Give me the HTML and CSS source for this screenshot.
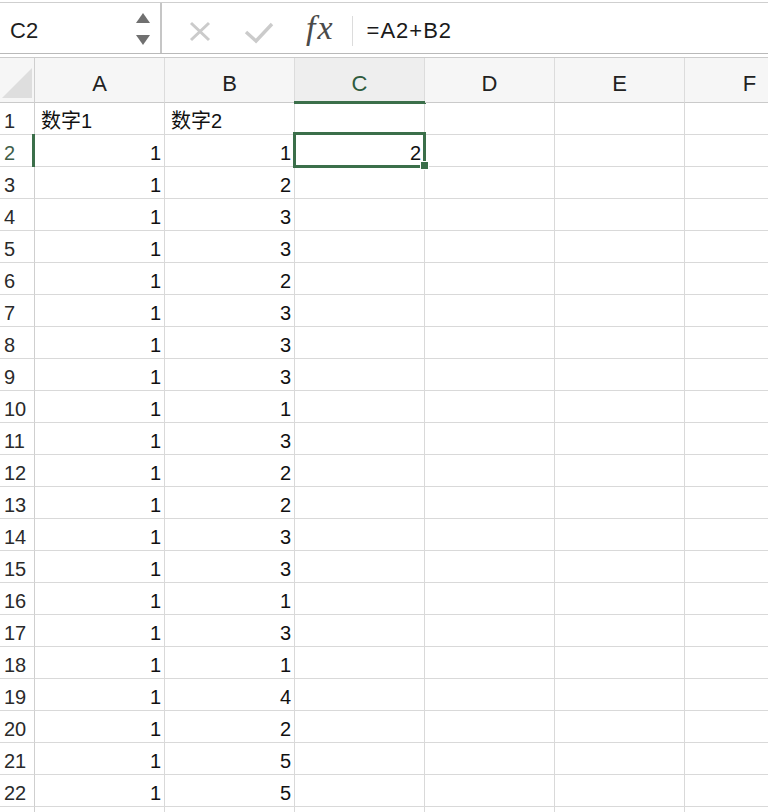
FILE: index.html
```html
<!DOCTYPE html>
<html lang="zh">
<head>
<meta charset="utf-8">
<title>Sheet</title>
<link rel="stylesheet" href="styles.css">
</head>
<body>
<div class="app">
  <div class="fbar">
    <div class="namebox">
      <span class="nb-text">C2</span>
      <svg class="spin" width="16" height="34" viewBox="0 0 16 34"><polygon points="8,1 1,11 15,11" fill="#707070"/><polygon points="1,23 15,23 8,33" fill="#707070"/></svg>
    </div>
    <svg class="ic-x" width="24" height="22" viewBox="0 0 24 22"><path d="M3 2 L21 19 M21 2 L3 19" stroke="#cbcbcb" stroke-width="3" fill="none"/></svg>
    <svg class="ic-ok" width="30" height="22" viewBox="0 0 30 22"><path d="M2 10 L12 19 L28 2" stroke="#cbcbcb" stroke-width="3.4" fill="none"/></svg>
    <span class="fx">fx</span>
    <span class="fdiv"></span>
    <span class="ftext">=A2+B2</span>
  </div>

  <div class="sheet">
    <div class="row head">
      <div class="corner"><svg width="30" height="30" viewBox="0 0 30 30"><polygon points="30,0 30,30 0,30" fill="#dedede"/></svg></div>
      <div class="ch">A</div><div class="ch">B</div><div class="ch on">C</div><div class="ch">D</div><div class="ch">E</div><div class="ch">F</div>
    </div>
    <div class="row"><div class="rh">1</div><div class="c">数字1</div><div class="c">数字2</div><div class="c"></div><div class="c"></div><div class="c"></div><div class="c"></div></div>
    <div class="row"><div class="rh on">2</div><div class="c n">1</div><div class="c n">1</div><div class="c n active">2<span class="sel"></span><span class="handle"></span></div><div class="c"></div><div class="c"></div><div class="c"></div></div>
    <div class="row"><div class="rh">3</div><div class="c n">1</div><div class="c n">2</div><div class="c"></div><div class="c"></div><div class="c"></div><div class="c"></div></div>
    <div class="row"><div class="rh">4</div><div class="c n">1</div><div class="c n">3</div><div class="c"></div><div class="c"></div><div class="c"></div><div class="c"></div></div>
    <div class="row"><div class="rh">5</div><div class="c n">1</div><div class="c n">3</div><div class="c"></div><div class="c"></div><div class="c"></div><div class="c"></div></div>
    <div class="row"><div class="rh">6</div><div class="c n">1</div><div class="c n">2</div><div class="c"></div><div class="c"></div><div class="c"></div><div class="c"></div></div>
    <div class="row"><div class="rh">7</div><div class="c n">1</div><div class="c n">3</div><div class="c"></div><div class="c"></div><div class="c"></div><div class="c"></div></div>
    <div class="row"><div class="rh">8</div><div class="c n">1</div><div class="c n">3</div><div class="c"></div><div class="c"></div><div class="c"></div><div class="c"></div></div>
    <div class="row"><div class="rh">9</div><div class="c n">1</div><div class="c n">3</div><div class="c"></div><div class="c"></div><div class="c"></div><div class="c"></div></div>
    <div class="row"><div class="rh">10</div><div class="c n">1</div><div class="c n">1</div><div class="c"></div><div class="c"></div><div class="c"></div><div class="c"></div></div>
    <div class="row"><div class="rh">11</div><div class="c n">1</div><div class="c n">3</div><div class="c"></div><div class="c"></div><div class="c"></div><div class="c"></div></div>
    <div class="row"><div class="rh">12</div><div class="c n">1</div><div class="c n">2</div><div class="c"></div><div class="c"></div><div class="c"></div><div class="c"></div></div>
    <div class="row"><div class="rh">13</div><div class="c n">1</div><div class="c n">2</div><div class="c"></div><div class="c"></div><div class="c"></div><div class="c"></div></div>
    <div class="row"><div class="rh">14</div><div class="c n">1</div><div class="c n">3</div><div class="c"></div><div class="c"></div><div class="c"></div><div class="c"></div></div>
    <div class="row"><div class="rh">15</div><div class="c n">1</div><div class="c n">3</div><div class="c"></div><div class="c"></div><div class="c"></div><div class="c"></div></div>
    <div class="row"><div class="rh">16</div><div class="c n">1</div><div class="c n">1</div><div class="c"></div><div class="c"></div><div class="c"></div><div class="c"></div></div>
    <div class="row"><div class="rh">17</div><div class="c n">1</div><div class="c n">3</div><div class="c"></div><div class="c"></div><div class="c"></div><div class="c"></div></div>
    <div class="row"><div class="rh">18</div><div class="c n">1</div><div class="c n">1</div><div class="c"></div><div class="c"></div><div class="c"></div><div class="c"></div></div>
    <div class="row"><div class="rh">19</div><div class="c n">1</div><div class="c n">4</div><div class="c"></div><div class="c"></div><div class="c"></div><div class="c"></div></div>
    <div class="row"><div class="rh">20</div><div class="c n">1</div><div class="c n">2</div><div class="c"></div><div class="c"></div><div class="c"></div><div class="c"></div></div>
    <div class="row"><div class="rh">21</div><div class="c n">1</div><div class="c n">5</div><div class="c"></div><div class="c"></div><div class="c"></div><div class="c"></div></div>
    <div class="row"><div class="rh">22</div><div class="c n">1</div><div class="c n">5</div><div class="c"></div><div class="c"></div><div class="c"></div><div class="c"></div></div>
    <div class="row"><div class="rh"></div><div class="c"></div><div class="c"></div><div class="c"></div><div class="c"></div><div class="c"></div><div class="c"></div></div>
  </div>
</div>
</body>
</html>
```

FILE: styles.css
```css
html, body {
  margin: 0;
  padding: 0;
  background: #fff;
}
body {
  width: 768px;
  height: 812px;
  overflow: hidden;
  font-family: "Liberation Sans", "Noto Sans CJK SC", Arial, sans-serif;
  color: #1e1e1e;
}
.app {
  width: 768px;
  height: 812px;
  overflow: hidden;
}

/* formula bar */
.fbar {
  margin-top: 2px;
  margin-bottom: 3px;
  height: 50px;
  border-top: 1px solid #cfcfcf;
  border-bottom: 1px solid #b9b9b9;
  display: flex;
  align-items: center;
}
.namebox {
  width: 162px;
  height: 50px;
  box-sizing: border-box;
  border-right: 2px solid #c6c6c6;
  display: flex;
  align-items: center;
  padding-left: 10px;
}
.nb-text {
  font-size: 22px;
  line-height: 22px;
  margin-top: 5px;
  color: #1e1e1e;
}
.spin {
  margin-left: auto;
  margin-right: 9px;
  margin-top: 1px;
}
.ic-x {
  margin-left: 26px;
  margin-top: 8px;
}
.ic-ok {
  margin-left: 32px;
  margin-top: 9px;
}
.fx {
  margin-left: 32px;
  font-family: "Liberation Serif", "DejaVu Serif", serif;
  font-style: italic;
  font-size: 34px;
  line-height: 34px;
  letter-spacing: 2px;
  color: #4a4a4a;
  margin-top: 0;
}
.fdiv {
  width: 1px;
  height: 30px;
  background: #dcdcdc;
  margin-left: 17px;
  margin-top: 6px;
}
.ftext {
  margin-left: 14px;
  font-size: 22px;
  line-height: 22px;
  margin-top: 5px;
  letter-spacing: 1px;
  color: #1a1a1a;
}

/* sheet */
.sheet {
  border-top: 1px solid #cbcbcb;
  width: 768px;
  overflow: hidden;
}
.row {
  display: grid;
  grid-template-columns: 35px repeat(6, 130px);
  height: 32px;
}
.row.head {
  height: 45px;
}
.row > div {
  box-sizing: border-box;
  border-right: 1px solid #d9d9d9;
  border-bottom: 1px solid #d9d9d9;
  display: flex;
  align-items: flex-end;
  font-size: 20px;
  line-height: 20px;
  white-space: nowrap;
}
.corner {
  background: #f6f6f6;
  justify-content: flex-end;
  padding: 0 2px 4px 0;
  border-right-color: #cfcfcf !important;
  border-bottom-color: #cacaca !important;
}
.ch {
  background: #f6f6f6;
  justify-content: center;
  font-size: 22px !important;
  line-height: 22px !important;
  padding-bottom: 7px;
  color: #222;
  border-bottom-color: #cacaca !important;
  border-right-color: #dcdcdc !important;
  position: relative;
}
.ch.on {
  background: #eeeeee;
  color: #2f5b3d;
}
.ch.on::after {
  content: "";
  position: absolute;
  left: -1px;
  right: -2px;
  bottom: -2px;
  height: 3px;
  background: #3b6f4a;
}
.rh {
  padding: 0 0 3px 4px;
  color: #2a2a2a;
  border-right-color: #cfcfcf !important;
  position: relative;
}
.rh.on {
  color: #3f5e49;
}
.rh.on::after {
  content: "";
  position: absolute;
  right: -1px;
  top: -1px;
  bottom: -1px;
  width: 3px;
  background: #3b6f4a;
}
.c {
  padding: 0 3px 3px 6px;
  color: #111;
}
.c.n {
  justify-content: flex-end;
}
.c.active {
  position: relative;
}
.sel {
  position: absolute;
  left: -2px;
  top: -3px;
  width: 133px;
  height: 36px;
  box-sizing: border-box;
  border: 3px solid #3b6f4a;
}
.handle {
  position: absolute;
  left: 125px;
  top: 26px;
  width: 7px;
  height: 7px;
  background: #3b6f4a;
  border: 1px solid #fff;
}
```
